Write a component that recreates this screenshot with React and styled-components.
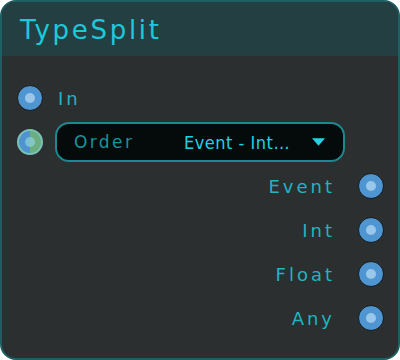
import React from "react";
import styled, { createGlobalStyle } from "styled-components";

const GlobalStyle = createGlobalStyle`
  html, body {
    margin: 0;
    padding: 0;
    background: #ffffff;
  }
  * {
    box-sizing: border-box;
  }
`;

const outputs = ["Event", "Int", "Float", "Any"];

export default function App() {
  return (
    <>
      <GlobalStyle />
      <Node>
        <Header>
          <Title>TypeSplit</Title>
        </Header>
        <Body>
          <Row>
            <Port />
            <Label>In</Label>
          </Row>
          <Row>
            <Port mixed />
            <Select>
              <SelectName>Order</SelectName>
              <SelectValue>Event - Int…</SelectValue>
              <Caret viewBox="0 0 14 8">
                <path d="M0 0 H14 L7 8 Z" fill="#22d3e6" />
              </Caret>
            </Select>
          </Row>
          {outputs.map((name) => (
            <Row key={name} right>
              <Label right>{name}</Label>
              <Port />
            </Row>
          ))}
        </Body>
      </Node>
    </>
  );
}

const Node = styled.div`
  width: 400px;
  height: 360px;
  border: 2px solid #1d5f62;
  border-radius: 16px;
  background: #2b2f30;
  overflow: hidden;
  font-family: "DejaVu Sans", "Open Sans", sans-serif;
`;

const Header = styled.div`
  height: 54px;
  background: #243f42;
  display: flex;
  align-items: center;
  padding: 0 18px;
`;

const Title = styled.div`
  color: #1cc9da;
  font-size: 26px;
  letter-spacing: 2.7px;
  font-weight: 400;
  margin-top: 1px;
`;

const Body = styled.div`
  display: flex;
  flex-direction: column;
  padding: 20px 14px 0 15px;
`;

const Row = styled.div`
  height: 44px;
  display: flex;
  align-items: center;
  justify-content: ${(p) => (p.right ? "flex-end" : "flex-start")};
  gap: 12px;
`;

const Port = styled.div`
  width: 26px;
  height: 26px;
  flex: none;
  border-radius: 50%;
  position: relative;
  border: ${(p) => (p.mixed ? "2px solid #78c2b6" : "1px solid #17191a")};
  background: ${(p) =>
    p.mixed
      ? "linear-gradient(90deg, #4f93cf 50%, #6cae82 50%)"
      : "#4f95d1"};
  &::after {
    content: "";
    position: absolute;
    left: 50%;
    top: 50%;
    width: 10px;
    height: 10px;
    margin: -5px 0 0 -5px;
    border-radius: 50%;
    background: ${(p) => (p.mixed ? "rgba(140, 205, 215, 0.75)" : "#9ac6ea")};
  }
`;

const Label = styled.span`
  color: #1fb4c2;
  font-size: 18px;
  letter-spacing: 3px;
  margin-left: ${(p) => (p.right ? "0" : "3px")};
  margin-right: ${(p) => (p.right ? "11px" : "0")};
`;

const Select = styled.div`
  flex: 1;
  height: 40px;
  margin-right: 39px;
  border: 2px solid #1a8990;
  border-radius: 14px;
  background: #050a0b;
  display: flex;
  align-items: center;
  padding: 0 0 0 17px;
`;

const SelectName = styled.span`
  color: #17949c;
  font-size: 17px;
  letter-spacing: 2.4px;
  width: 110px;
`;

const SelectValue = styled.span`
  color: #20d2e4;
  font-family: "DejaVu Sans Condensed", "DejaVu Sans", sans-serif;
  font-stretch: condensed;
  font-size: 18px;
  letter-spacing: 0.5px;
  flex: 1;
`;

const Caret = styled.svg`
  width: 13px;
  height: 8px;
  margin-right: 18px;
`;
